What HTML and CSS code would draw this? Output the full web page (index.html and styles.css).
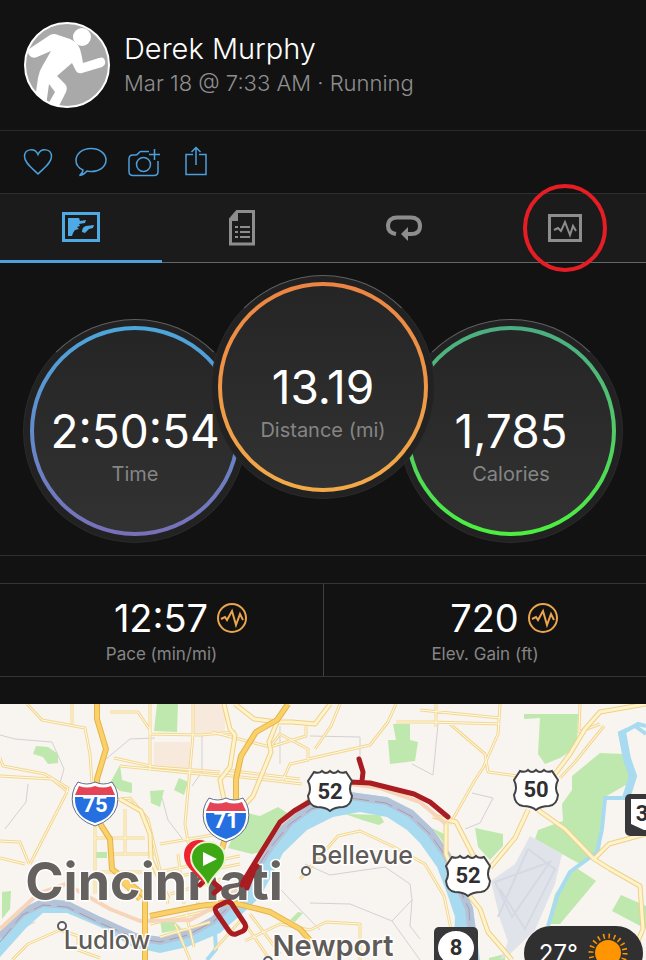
FILE: index.html
```html
<!DOCTYPE html>
<html lang="en">
<head>
<meta charset="UTF-8">
<meta name="viewport" content="width=device-width, initial-scale=1.0">
<title>Derek Murphy - Running</title>
<link rel="stylesheet" href="styles.css">
</head>
<body>
    <header class="profile">
        <svg class="avatar" viewBox="0 0 86 86" role="img" aria-label="Runner">
            <defs><clipPath id="avatarClip"><circle cx="43" cy="43" r="42"/></clipPath></defs>
            <circle cx="43" cy="43" r="42" fill="#a9a9a9"/>
            <g clip-path="url(#avatarClip)" fill="#fff">
                <circle cx="58" cy="15" r="9"/>
                <path d="M5 27L26 13Q30 11 34 13L46 17Q53 20 56 27Q58 34 59 41L75 36Q80 34 81 39Q82 43 78 45L58 51Q54 52 52 49L48 41L33 54L41 62Q44 65 42 70L34 86H22L31 70L25 62L22 84H10L14 56Q15 49 19 43L27 29L13 35Q8 37 5 33Q3 29 5 27Z"/>
            </g>
            <circle cx="43" cy="43" r="42" fill="none" stroke="#fff" stroke-width="2"/>
        </svg>
        <div class="profile-text">
            <h1>Derek Murphy</h1>
            <p>Mar 18 @ 7:33 AM · Running</p>
        </div>
    </header>

    <div class="actions">
        <button type="button" aria-label="Like">
            <svg width="32" height="32" viewBox="0 0 32 32"><path d="M16 28C10 22 2.500 17 2.500 10.500C2.500 2.500 13 1.500 16 8.500C19 1.500 29.500 2.500 29.500 10.500C29.500 17 22 22 16 28Z"/></svg>
        </button>
        <button type="button" aria-label="Comment">
            <svg width="32" height="32" viewBox="0 0 32 32"><path d="M8 24C3.500 22 1 18.500 1 14.500C1 7.500 7.500 2.500 16 2.500C24.500 2.500 31 7.500 31 14C31 21 24 26 15 25.500L12 25C10 27.500 7.500 29 4.500 29.500C6.500 28 8 26.500 8 24Z"/></svg>
        </button>
        <button type="button" aria-label="Add photo">
            <svg width="32" height="32" viewBox="0 0 32 32"><path d="M21 5.500H13C10.500 5.500 10.500 9 8 9H5C2.500 9 1 10.500 1 13V25.500C1 28 2.500 29.500 5 29.500H26C28.500 29.500 30 28 30 25.500V15M26.500 3V14M21 8.500H32"/><circle cx="15.500" cy="18.500" r="7"/></svg>
        </button>
        <button type="button" aria-label="Share">
            <svg width="32" height="32" viewBox="0 0 32 32"><path d="M12 8.500H5V28.500H25V8.500H18M15 19V2M10.500 6L15 1.500L19.500 6"/></svg>
        </button>
    </div>

    <nav class="tabs">
        <button type="button" class="tab active" aria-label="Map">
            <svg width="38" height="30" viewBox="0 0 38 30"><rect x="1.500" y="1.500" width="35" height="27" fill="none" stroke="currentColor" stroke-width="3"/><path d="M6 6H17L18 9L24 8L23 11L17 12L18 14L15 15L17 17L13 18L11 21L10 24H6ZM20 20Q20 15 24 14L32 13L31 16L27 17L23 21Z" fill="currentColor"/></svg>
        </button>
        <button type="button" class="tab" aria-label="Details">
            <svg width="28" height="36" viewBox="0 0 28 36"><path d="M9 1.500H25.500V34H2.500V9Z" fill="none" stroke="currentColor" stroke-width="3"/><path d="M2 10L10 1V11H2ZM7 16H10V18H7ZM12 16H22V18H12ZM7 21H10V23H7ZM12 21H22V23H12ZM7 26H10V28H7ZM12 26H22V28H12Z" fill="currentColor"/></svg>
        </button>
        <button type="button" class="tab" aria-label="Laps">
            <svg width="36" height="26" viewBox="0 0 36 26"><path d="M10 19C4 18 2 15 2 11C2 5 6 2.500 11 2.500H25C30 2.500 34 5 34 11C34 16 31 19 25 19H20" fill="none" stroke="currentColor" stroke-width="4"/><path d="M15 19L22 12V26Z" fill="currentColor"/></svg>
        </button>
        <button type="button" class="tab" aria-label="Charts">
            <svg width="34" height="28" viewBox="0 0 34 28"><rect x="1.500" y="1.500" width="31" height="25" fill="none" stroke="currentColor" stroke-width="3"/><path d="M6 16L10 14L13 17L17 8L22 21L25 12L28 17" fill="none" stroke="currentColor" stroke-width="2"/></svg>
            <svg class="marker" width="84" height="88" viewBox="0 0 84 88"><ellipse cx="42" cy="44" rx="40" ry="42" fill="none" stroke="#e71d25" stroke-width="4"/></svg>
        </button>
    </nav>

    <section class="gauges">
        <div class="gauge time"><div class="ring"><strong>2:50:54</strong><span>Time</span></div></div>
        <div class="gauge distance"><div class="ring"><strong>13.19</strong><span>Distance (mi)</span></div></div>
        <div class="gauge calories"><div class="ring"><strong>1,785</strong><span>Calories</span></div></div>
    </section>

    <section class="stats">
        <div class="stat">
            <div class="stat-value">
                <strong>12:57</strong>
                <svg width="30" height="30" viewBox="0 0 30 30"><circle cx="15" cy="15" r="14"/><path d="M4 16L8 14L10 17L15 8L19 22L23 11L26 17"/></svg>
            </div>
            <span>Pace (min/mi)</span>
        </div>
        <div class="stat">
            <div class="stat-value">
                <strong>720</strong>
                <svg width="30" height="30" viewBox="0 0 30 30"><circle cx="15" cy="15" r="14"/><path d="M4 16L8 14L10 17L15 8L19 22L23 11L26 17"/></svg>
            </div>
            <span>Elev. Gain (ft)</span>
        </div>
    </section>

    <section class="map">
        <svg class="map-canvas" viewBox="0 0 646 256" preserveAspectRatio="xMidYMid slice" role="img" aria-label="Route map of Cincinnati">
            <defs>
                <path id="minor" d="M27 0L42 16L85 24L90 50L92 80M72 0V20M110 8H138L150 26V66M150 0V30M114 54L155 63L220 68M120 62L220 72M150 30L200 31L236 28M193 0V31L185 120L192 160M0 54L3 62L45 70L68 84L66 90L30 160M0 72L52 75L68 88M115 96L130 94L148 115L168 200M95 134H145M110 150H155M95 110V190M125 105V150M100 168H158L240 152M160 140L230 128M165 175L240 160M170 190L240 170M178 150L184 200M192 150L198 200M207 150L212 190M150 220L215 205M160 233L210 218M225 66L300 75M224 71L302 80M212 28L270 43L306 32V22M271 42L280 30L308 45V56L290 60L282 78M308 55L370 41L388 18L396 0M340 0L331 22L315 45M396 18H430L500 20M420 6L500 14M436 0V23M500 0L498 30L483 64L475 76L450 120M450 20L485 50L488 68L518 72M580 0L579 28L600 20M604 22L575 58L560 74M300 175L338 132L360 127L392 142L425 160L444 192L451 225V256M245 237L280 220L310 226L326 218L360 220V256M0 137L20 138L29 160M0 154L25 160M12 256L28 240L60 226L78 232L78 246L100 254M175 220L190 256M186 210L194 243M214 246L242 215L270 256M250 210L280 250"/>
                <path id="main" d="M235 0L254 15L277 18L269 38L271 48L253 92L236 110M224 0L230 25L235 31L230 63L220 76L224 96M277 18L292 18L315 20L330 0M646 0L600 8L585 25L570 50L555 70M528 106L515 134L490 164M538 106L565 125L594 155L610 165L640 182L643 225L630 256M594 155L609 140L646 130M446 119V150L456 175L480 205L488 228L512 256M433 112L456 118L475 155M120 95L141 107L150 130L151 155L168 195"/>
                <path id="us" d="M-16 -19Q-11 -17 -8 -20Q-4 -16 0 -20Q4 -16 8 -20Q11 -17 16 -19L22 -10Q18 -2 22 5Q21 15 13 16Q5 16 0 20Q-5 16 -13 16Q-21 15 -22 5Q-18 -2 -22 -10Z"/>
            </defs>
            <rect width="646" height="256" fill="#f8f4ef"/>
            <g fill="#f7e9db">
                <path d="M154 38H190V64H154ZM193 0H225V30H193Z"/>
            </g>
            <g fill="#bfe8ae">
                <path d="M157 0H178L177 28L154 27ZM36 42L48 43L58 50L58 59L48 60L43 53L33 50ZM120 61L122 76L132 79V89L120 87L110 79ZM150 87L164 86L160 103L151 99ZM179 74L188 78L184 91L174 86ZM2 188L11 187L10 205L2 215ZM95 148H107V154H95ZM160 215L175 218L182 225L162 229Z"/>
                <path d="M393 20H410L410 36L418 38L415 57L390 60L388 36H396ZM238 107L260 112L278 103L292 112L270 146L252 150L228 144L234 130L230 116ZM345 110L380 111L384 118L379 121L362 116ZM298 208L303 209L295 218L290 216Z"/>
                <path d="M524 10H578L577 43L560 54L545 60L538 50L540 14L524 15ZM600 49L624 50L633 77L603 94L600 150L580 160L535 135L538 126L563 117L562 100L572 86L572 72ZM475 124L503 130V142L490 156L478 143ZM432 124L448 132V144ZM575 163L596 177L560 220L547 220L555 190ZM621 191L646 202V225L612 207ZM489 254L505 250V256H489Z"/>
            </g>
            <path d="M530 132L562 150L555 180L535 226L510 250L500 256L508 238L500 215L491 177L515 160Z" fill="#e0e3ea"/>
            <path d="M495 178L550 158L512 213ZM528 145L498 213M528 145L555 165L525 225L500 185" fill="none" stroke="#d5d9e3" stroke-width="2"/>
            <path d="M0 31L15 35L52 38L64 65L60 79M28 80L26 98L5 125M100 60L130 35L155 34M202 30V68L192 82M162 94L168 116L184 137M280 22V60M310 32L360 33V60M438 20L433 71L412 60M472 89L493 94L480 119L465 125M305 160L330 171L385 163L410 180L412 196L392 217L350 200L310 199M392 217L420 256M280 185L320 226M412 196L410 222L420 235M0 235L35 218" fill="none" stroke="#d3d1d4" stroke-width="1"/>

            <!-- Rivers -->
            <path d="M0 229L20 206L43 194L67 197L100 213L133 229L160 233L187 226L213 213L233 193L250 169L267 139L287 113L310 98L350 88L387 93L413 106L433 126L450 149L463 183L473 203L480 256H453L455 213L447 189L437 163L420 139L407 126L387 113L360 108L333 113L307 126L283 149L273 169L260 193L243 209L220 229L187 243L160 249L133 243L100 223L67 209L43 209L27 223L0 253Z" fill="#a8dbf0"/>
            <path d="M0 233L22 209L43 199L67 201L100 217L135 233L160 237L188 230L214 216L235 196L252 171L270 143L290 118L311 103L350 92L386 97L411 110L430 128L447 152L460 184L469 205L475 256" fill="none" stroke="#b5c3d9" stroke-width="8"/>
            <path d="M0 238L22 211L43 201L67 203L100 219L135 234L160 238L188 231L214 217L235 197L252 172L270 144L290 120L311 105L350 94L386 99L411 112L430 130L447 154L460 186L469 205L472 256" fill="none" stroke="#a99aaa" stroke-width="1" stroke-dasharray="18 6"/>
            <path d="M646 30L635 22L620 29L624 48L632 74L625 94H605L602 125L597 148L570 168L558 190L548 222M646 22L638 20L622 29M215 230L216 245L207 256" fill="none" stroke="#a8dbf0" stroke-width="4"/>
            <path d="M622 28L627 55L633 72L626 94" fill="none" stroke="#a8dbf0" stroke-width="8"/>

            <!-- Roads -->
            <g fill="none" stroke-linejoin="round">
                <use href="#minor" stroke="#f3d792" stroke-width="3"/>
                <use href="#minor" stroke="#fffbe6" stroke-width="1"/>
                <use href="#main" stroke="#eed08a" stroke-width="5"/>
                <use href="#main" stroke="#fff3c9" stroke-width="3"/>
                <path d="M0 225L38 190L66 180L110 205L140 217L190 216L220 200L245 177L278 122L310 95L350 80L380 84L420 98L446 120" stroke="#f6d5ba" stroke-width="4"/>
                <path d="M97 0V15L106 45L97 75V115L110 135L112 165L145 192V256M150 212L200 202L230 198L270 208L300 225L322 250M288 0L277 16L256 28L241 52L236 75V95L222 145M140 195L120 175" stroke="#e4b34a" stroke-width="6"/>
                <path d="M97 0V15L106 45L97 75V115L110 135L112 165L145 192V256M150 212L200 202L230 198L270 208L300 225L322 250M288 0L277 16L256 28L241 52L236 75V95L222 145M140 195L120 175" stroke="#fad068" stroke-width="4"/>
            </g>

            <!-- Places -->
            <g class="place">
                <text class="city" x="154" y="196">Cincinnati</text>
                <text class="town" x="362" y="160">Bellevue</text>
                <text class="town" x="107" y="245">Ludlow</text>
                <text class="town-large" x="333" y="252">Newport</text>
                <circle cx="306" cy="167" r="4"/>
                <circle cx="62" cy="222" r="4"/>
                <circle cx="268" cy="257" r="4"/>
            </g>

            <!-- Recorded route -->
            <g fill="none" stroke="#a91c22" stroke-width="5" stroke-linecap="round" stroke-linejoin="round">
                <path d="M200 181L204 177M214 179L220 184L214 189M242 181L257 162M243 178L262 147L280 118L294 107L316 94L350 78L370 79L414 90L430 98L448 113M359 55L363 68L362 77"/>
                <path d="M244 177L253 169L247 184Z" fill="#a91c22"/>
                <path d="M218 202L226 198Q231 197 233 202L245 220Q247 224 243 227L236 230Q232 231 229 227L216 208Q214 204 218 202Z"/>
            </g>

            <g class="shield">
                <g transform="translate(95 98)">
                    <path d="M-17 -20Q-8 -16 0 -20Q8 -16 17 -20Q25 -10 22 4Q18 18 0 24Q-18 18 -22 4Q-25 -10 -17 -20Z" fill="#fff" stroke="#626f8c" stroke-width="1"/>
                    <path d="M-16 -16Q-8 -13 0 -16Q8 -13 16 -16L20 -7H-20Z" fill="#e54456"/>
                    <path d="M-20 -5H20Q21 15 0 21Q-21 15 -20 -5Z" fill="#256fe0"/>
                    <text class="light" y="10">75</text>
                </g>
                <g transform="translate(226 114)">
                    <path d="M-17 -20Q-8 -16 0 -20Q8 -16 17 -20Q25 -10 22 4Q18 18 0 24Q-18 18 -22 4Q-25 -10 -17 -20Z" fill="#fff" stroke="#626f8c" stroke-width="1"/>
                    <path d="M-16 -16Q-8 -13 0 -16Q8 -13 16 -16L20 -7H-20Z" fill="#e54456"/>
                    <path d="M-20 -5H20Q21 15 0 21Q-21 15 -20 -5Z" fill="#256fe0"/>
                    <text class="light" y="10">71</text>
                </g>
                <g fill="#fff" stroke="#434346" stroke-width="2">
                    <use href="#us" x="330" y="87"/>
                    <use href="#us" x="536" y="86"/>
                    <use href="#us" x="468" y="172"/>
                </g>
                <text x="330" y="95">52</text>
                <text x="536" y="93">50</text>
                <text x="468" y="179">52</text>
                <rect x="434" y="223" width="44" height="44" rx="5" fill="#38383a"/>
                <ellipse cx="456" cy="244" rx="18" ry="17" fill="#fff"/>
                <text x="456" y="251">8</text>
                <rect x="625" y="90" width="44" height="42" rx="5" fill="#38383a"/>
                <path d="M631 95H660V126H644L631 120Z" fill="#fff"/>
                <text x="642" y="117">3</text>
            </g>

            <!-- Finish and start pins -->
            <path d="M199 136C209 136 216 143 216 152C216 163 205 169 203 180C200 171 184 165 184 151C184 142 191 136 199 136Z" fill="#ed2430"/>
            <path d="M208 138C218 138 225 145 225 154C225 166 211 171 208 183C205 171 191 166 191 154C191 145 198 138 208 138Z" fill="#3da813" stroke="#e9f4cf" stroke-width="2"/>
            <path d="M203 148L217 155L203 162Z" fill="#fff"/>
        </svg>

        <div class="weather">
            <span>27°</span>
            <svg width="40" height="40" viewBox="0 0 40 40"><circle cx="20" cy="20" r="13" fill="#ff9500"/><circle cx="20" cy="20" r="17" fill="none" stroke="#ff9500" stroke-width="5" stroke-dasharray="1.500 3.840"/></svg>
        </div>
    </section>
</body>
</html>
```
FILE: styles.css
```css
* {
    box-sizing: border-box;
}

body {
    margin: 0;
    min-height: 100vh;
    display: flex;
    flex-direction: column;
    background-color: #121212;
    color: #ffffff;
    font-family: Inter, "Liberation Sans", sans-serif;
}

h1, p {
    margin: 0;
}

strong {
    font-weight: normal;
}

button {
    padding: 0;
    border: none;
    background: none;
    cursor: pointer;
}

svg {
    display: block;
}

.profile {
    display: flex;
    gap: 14px;
    padding: 22px 24px;
    border-bottom: 1px solid #2a2a2a;
}

.avatar {
    width: 86px;
    height: 86px;
}

.profile-text {
    padding-top: 8px;
}

.profile-text h1 {
    font-size: 29px;
    font-weight: 300;
    line-height: 38px;
}

.profile-text p {
    font-size: 22px;
    font-weight: 300;
    line-height: 30px;
    color: #8f8f8f;
}

/* Like, comment, photo, share */
.actions {
    display: flex;
    gap: 21px;
    height: 62px;
    padding: 14px 22px;
}

.actions svg {
    fill: none;
    stroke: #4d9fda;
    stroke-width: 1.5;
}

.tabs {
    display: grid;
    grid-template-columns: repeat(4, 1fr);
    height: 70px;
    background-color: #1b1b1b;
    border-top: 1px solid #2e2e2e;
}

.tab {
    position: relative;
    display: flex;
    align-items: center;
    justify-content: center;
    color: #8d8d8d;
    border-bottom: 1px solid #666666;
}

.tab.active {
    color: #4fa9e4;
    border-bottom: 3px solid #4fa0da;
}

.marker {
    position: absolute;
    top: 50%;
    left: 50%;
    transform: translate(-50%, -50%);
}

/* Overlapping dials */
.gauges {
    display: flex;
    justify-content: center;
    padding: 12px 0;
    border-bottom: 1px solid #2e2e2e;
}

.gauge {
    width: 224px;
    height: 224px;
    margin: 44px -18px 0;
    padding: 6px;
    border-radius: 50%;
    border: 1px solid #2b2b2b;
    border-top-color: #606060;
    background-color: #222222;
}

.gauge.distance {
    position: relative;
    margin-top: 0;
    margin-bottom: 44px;
}

.ring {
    display: flex;
    flex-direction: column;
    align-items: center;
    height: 100%;
    padding-top: 73px;
    border: 4px solid transparent;
    border-radius: 50%;
}

.time .ring {
    background: linear-gradient(#252525, #323232) padding-box, linear-gradient(#4ca6dc, #7870b8) border-box;
}

.distance .ring {
    background: linear-gradient(#252525, #323232) padding-box, linear-gradient(#ec8444, #f2aa48) border-box;
}

.calories .ring {
    background: linear-gradient(#252525, #323232) padding-box, linear-gradient(#4bad83, #52c76b 45%, #4bf13e) border-box;
}

.ring strong {
    font-size: 46px;
    line-height: 56px;
}

.ring span {
    font-size: 20px;
    line-height: 30px;
    color: #858585;
}

.stats {
    display: grid;
    grid-template-columns: 1fr 1fr;
    margin: 27px 0;
    border-top: 1px solid #353535;
    border-bottom: 1px solid #353535;
}

.stat {
    display: flex;
    flex-direction: column;
    align-items: center;
    height: 92px;
    padding-top: 13px;
}

.stat + .stat {
    border-left: 1px solid #404040;
}

.stat-value {
    display: flex;
    align-items: center;
    gap: 9px;
    padding-left: 38px;
}

.stat-value strong {
    font-size: 38px;
    line-height: 42px;
}

.stat-value svg {
    fill: none;
    stroke: #eba64d;
    stroke-width: 2;
}

.stat span {
    font-size: 17px;
    line-height: 30px;
    color: #858585;
}

.map {
    position: relative;
    flex: 1;
    min-height: 240px;
    overflow: hidden;
}

.map-canvas {
    position: absolute;
    width: 100%;
    height: 100%;
}

.place text {
    fill: #5f5b58;
    stroke: #ffffff;
    stroke-width: 3px;
    paint-order: stroke;
    text-anchor: middle;
}

.place circle {
    fill: #ffffff;
    stroke: #5c5c5c;
    stroke-width: 2;
}

.place .city {
    font-size: 52px;
    font-weight: 700;
    fill: #66625f;
}

.place .town {
    font-size: 25px;
    font-weight: 500;
}

.place .town-large {
    font-size: 29px;
    font-weight: 600;
}

.shield text {
    font-family: Roboto, Inter, sans-serif;
    font-size: 22px;
    font-weight: 700;
    text-anchor: middle;
    fill: #2f2f31;
}

.shield .light {
    fill: #ffffff;
}

.weather {
    position: absolute;
    right: 3px;
    bottom: -20px;
    display: flex;
    align-items: center;
    gap: 10px;
    height: 54px;
    padding: 0 15px;
    border-radius: 27px;
    background-color: #303031;
    font-size: 24px;
}
```
